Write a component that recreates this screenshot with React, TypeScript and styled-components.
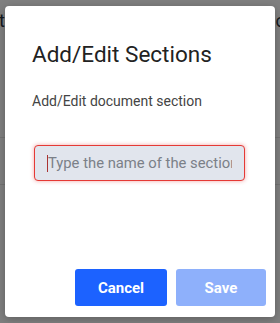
import React from "react";
import styled, { createGlobalStyle } from "styled-components";

const Global = createGlobalStyle`
  html, body { margin: 0; padding: 0; }
  body { font-family: Roboto, "Noto Sans", Arial, sans-serif; background: #fff; }
  * { box-sizing: border-box; }
`;

const Page = styled.div`
  width: 280px;
  height: 323px;
  position: relative;
  overflow: hidden;
  background: #fff;
`;

const BgRow = styled.div`
  height: 24px;
  padding-top: 12px;
  display: flex;
  justify-content: space-between;
  font-size: 18px;
  color: #2a3340;
  line-height: 18px;
  margin-left: -1px;
  margin-right: -5px;
`;

const BgLine = styled.div<{ $top: number }>`
  height: 1px;
  background: #e4e4e4;
  margin-top: ${(p) => p.$top}px;
`;

const Backdrop = styled.div`
  position: absolute;
  inset: 0;
  background: rgba(0, 0, 0, 0.5);
  padding: 6px 5px;
`;

const Modal = styled.div`
  width: 270px;
  height: 311px;
  background: #fff;
  border-radius: 4px;
  box-shadow: 0 2px 8px rgba(0, 0, 0, 0.25);
  padding: 35px 9px 11px 27px;
  display: flex;
  flex-direction: column;
`;

const Title = styled.h2`
  margin: 0;
  font-size: 22.5px;
  line-height: 27px;
  font-weight: 400;
  color: #222;
`;

const Subtitle = styled.p`
  margin: 25px 0 0;
  font-size: 14px;
  line-height: 16px;
  color: #444;
`;

const Field = styled.div`
  position: relative;
  margin: 36px 0 0 2px;
  width: 211px;
`;

const Input = styled.input`
  width: 211px;
  height: 36px;
  border: 1px solid #e53935;
  border-radius: 4px;
  background: #e1e5ed;
  box-shadow: 0 0 4px rgba(229, 57, 53, 0.45);
  padding: 0 12px 0 13px;
  font-family: Roboto, Arial, sans-serif;
  font-size: 14.8px;
  color: #333;
  caret-color: #c62828;
  outline: none;
  &::placeholder { color: #7b8088; }
`;

const Caret = styled.span`
  position: absolute;
  left: 13px;
  top: 10px;
  width: 1px;
  height: 17px;
  background: #a33;
`;

const Actions = styled.div`
  margin-top: auto;
  display: flex;
  justify-content: flex-end;
  gap: 9px;
`;

const Button = styled.button<{ $disabled?: boolean; $w: number }>`
  width: ${(p) => p.$w}px;
  height: 37px;
  border: none;
  border-radius: 3px;
  background: ${(p) => (p.$disabled ? "#8eb0fb" : "#1c62ff")};
  color: #fff;
  font-family: Roboto, Arial, sans-serif;
  font-weight: 700;
  font-size: 15px;
  padding: 0;
  cursor: pointer;
`;

export default function App() {
  return (
    <>
      <Global />
      <Page>
        <BgRow>
          <span>t</span>
          <span>c</span>
        </BgRow>
        <BgLine $top={113} />
        <BgLine $top={46} />
        <Backdrop>
          <Modal>
            <Title>Add/Edit Sections</Title>
            <Subtitle>Add/Edit document section</Subtitle>
            <Field>
              <Input placeholder="Type the name of the section" />
              <Caret />
            </Field>
            <Actions>
              <Button $w={92}>Cancel</Button>
              <Button $w={90} $disabled>
                Save
              </Button>
            </Actions>
          </Modal>
        </Backdrop>
      </Page>
    </>
  );
}
